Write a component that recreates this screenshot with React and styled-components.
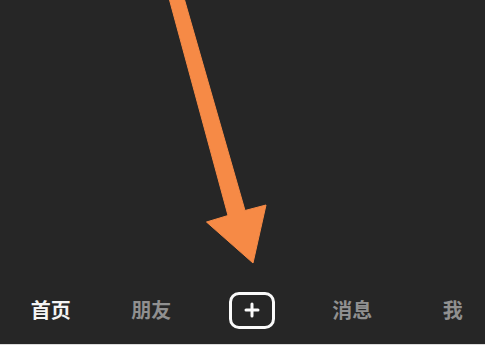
import React from "react";
import styled, { createGlobalStyle } from "styled-components";

const Global = createGlobalStyle`
  html, body { margin: 0; padding: 0; background: #262626; }
  #root { width: 485px; height: 345px; }
`;

const Screen = styled.div`
  position: relative;
  width: 485px;
  height: 345px;
  box-sizing: border-box;
  background: #262626;
  display: flex;
  flex-direction: column;
  overflow: hidden;
  border-bottom: 1px solid #dcdcdc;
  font-family: "Noto Sans CJK SC", "Noto Sans", sans-serif;
`;

const Content = styled.div`
  flex: 1;
`;

const TabBar = styled.nav`
  height: 50px;
  margin-bottom: 9px;
  display: grid;
  grid-template-columns: repeat(5, 100.5px);
  padding-left: 0.5px;
  align-items: center;
`;

const Tab = styled.div`
  display: flex;
  justify-content: center;
  align-items: center;
  font-size: 20px;
  font-weight: 700;
  line-height: 1;
  color: ${(p) => (p.$active ? "#f4f4f4" : "#909090")};
`;

const PlusButton = styled.div`
  position: relative;
  width: 46px;
  height: 37px;
  box-sizing: border-box;
  border: 3px solid #fafafa;
  border-radius: 10px;
  margin-left: 1px;
  &::before,
  &::after {
    content: "";
    position: absolute;
    left: 50%;
    top: 50%;
    background: #fafafa;
    border-radius: 1.5px;
    transform: translate(-50%, -50%);
  }
  &::before { width: 15px; height: 3px; }
  &::after { width: 3px; height: 15px; }
`;

const ArrowOverlay = styled.svg`
  position: absolute;
  left: 0;
  top: 0;
  width: 485px;
  height: 345px;
  pointer-events: none;
`;

export default function App() {
  return (
    <>
      <Global />
      <Screen>
        <Content />
        <TabBar>
          <Tab $active>首页</Tab>
          <Tab>朋友</Tab>
          <Tab>
            <PlusButton />
          </Tab>
          <Tab>消息</Tab>
          <Tab>我</Tab>
        </TabBar>
        <ArrowOverlay viewBox="0 0 485 345">
          <polygon
            points="169,-2 184,-2 245,210.5 266,205 253,263 206.5,222 228,215.5"
            fill="#f68a46"
            stroke="#f68a46"
            strokeWidth="1"
            strokeLinejoin="round"
          />
        </ArrowOverlay>
      </Screen>
    </>
  );
}
